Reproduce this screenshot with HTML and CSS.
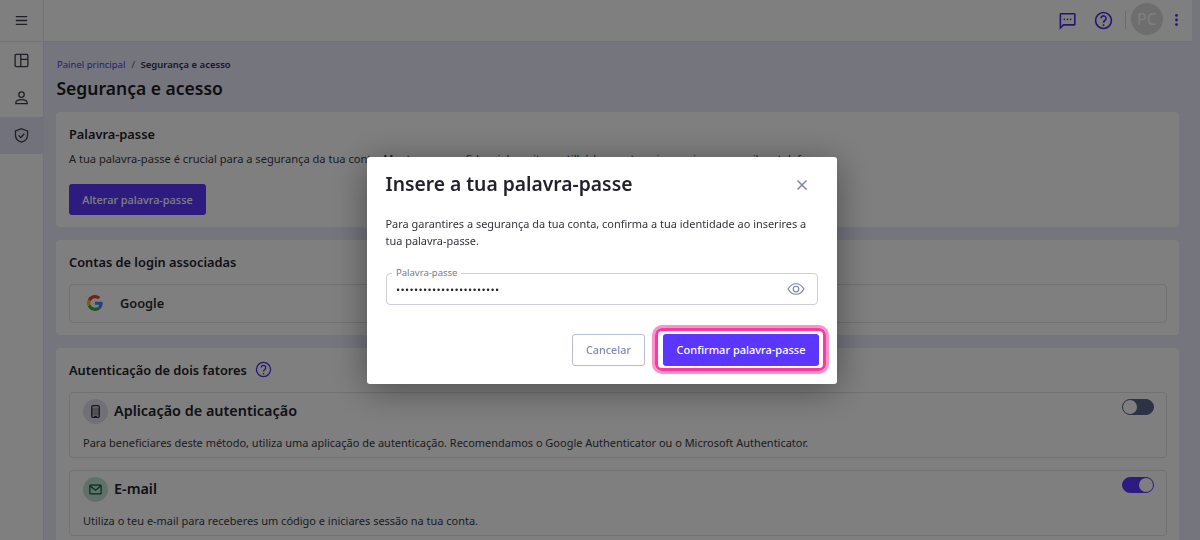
FILE: index.html
```html
<!DOCTYPE html>
<html lang="pt">
<head>
<meta charset="utf-8">
<title>Segurança e acesso</title>
<link rel="stylesheet" href="styles.css">
</head>
<body>
<div class="app">
  <header class="topbar">
    <div class="menu-cell">
      <svg class="ico" viewBox="0 0 24 24"><path d="M4 6.500h16M4 12h16M4 17.500h16" class="st"/></svg>
    </div>
    <div class="top-actions">
      <svg class="ico-lg blue" viewBox="0 0 24 24"><path d="M3.500 3.500h17a.8.8 0 0 1 .8.8v12.400a.8.8 0 0 1-.8.8H7l-4 3.800V4.300a.8.8 0 0 1 .5-.8z" class="st"/><circle cx="8" cy="10.500" r="1.100" class="fl"/><circle cx="12" cy="10.500" r="1.100" class="fl"/><circle cx="16" cy="10.500" r="1.100" class="fl"/></svg>
      <svg class="ico-lg blue help" viewBox="0 0 24 24"><circle cx="12" cy="12" r="10" class="st"/><path d="M8.800 9.300a3.200 3.200 0 1 1 5 2.700c-1.200.8-1.800 1.400-1.800 2.800" class="st"/><circle cx="12" cy="18" r="1.200" class="fl"/></svg>
      <span class="divider"></span>
      <span class="avatar">PC</span>
      <svg class="kebab blue" viewBox="0 0 6 20"><circle cx="3" cy="3.500" r="2" class="fl"/><circle cx="3" cy="10" r="2" class="fl"/><circle cx="3" cy="16.500" r="2" class="fl"/></svg>
    </div>
  </header>
  <div class="below">
    <nav class="sidebar">
      <div class="nav-item"><svg class="ico" viewBox="0 0 24 24"><rect x="3" y="3.500" width="18" height="17" rx="1.500" class="st"/><path d="M11 3.500v17M11 10.500h10" class="st"/></svg></div>
      <div class="nav-item"><svg class="ico" viewBox="0 0 24 24"><circle cx="12" cy="8" r="3.800" class="st"/><path d="M4 19.500c0-3 3.500-4.500 8-4.500s8 1.500 8 4.500v1H4z" class="st"/></svg></div>
      <div class="nav-item active"><svg class="ico" viewBox="0 0 24 24"><path d="M12 2.500l8.500 3v6.200c0 4.700-3.500 8.300-8.500 9.800-5-1.500-8.500-5.100-8.500-9.800V5.500z" class="st"/><path d="M8 11.800l3 3 5-5.300" class="st"/></svg></div>
    </nav>
    <main class="content">
      <div class="crumbs"><a class="crumb-link">Painel principal</a><span class="crumb-sep">/</span><strong class="crumb-now">Segurança e acesso</strong></div>
      <h1 class="page-title">Segurança e acesso</h1>

      <section class="card card-pass">
        <h2 class="card-title">Palavra-passe</h2>
        <p class="card-text">A tua palavra-passe é crucial para a segurança da tua conta. Mantem-na confidencial e evita partilhá-la com terceiros, seja por e-mail ou telefone.</p>
        <button class="btn-dark">Alterar palavra-passe</button>
      </section>

      <section class="card card-login">
        <h2 class="card-title">Contas de login associadas</h2>
        <div class="inner google-row">
          <svg class="google" viewBox="0 0 48 48"><path fill="#EA4335" d="M24 9.500c3.500 0 6.700 1.200 9.200 3.600l6.900-6.900C35.900 2.400 30.500 0 24 0 14.600 0 6.500 5.400 2.600 13.200l8 6.200C12.400 13.700 17.700 9.500 24 9.500z"/><path fill="#4285F4" d="M46.900 24.500c0-1.600-.1-3.100-.4-4.500H24v9h12.900c-.6 3-2.200 5.500-4.700 7.200l7.700 6c4.500-4.200 7-10.300 7-17.700z"/><path fill="#FBBC05" d="M10.500 28.600c-.5-1.400-.8-3-.8-4.600s.3-3.200.8-4.600l-8-6.200C.9 16.500 0 20.100 0 24s.9 7.500 2.600 10.800l7.900-6.200z"/><path fill="#34A853" d="M24 48c6.500 0 11.900-2.100 15.900-5.800l-7.700-6c-2.200 1.500-4.900 2.300-8.200 2.300-6.300 0-11.600-4.200-13.500-9.900l-8 6.200C6.500 42.600 14.600 48 24 48z"/></svg>
          <span class="google-name">Google</span>
        </div>
      </section>

      <section class="card card-2fa">
        <h2 class="card-title title-help">Autenticação de dois fatores
          <svg class="ico-help blue" viewBox="0 0 24 24"><circle cx="12" cy="12" r="10" class="st"/><path d="M8.800 9.300a3.200 3.200 0 1 1 5 2.700c-1.200.8-1.800 1.400-1.800 2.800" class="st"/><circle cx="12" cy="18" r="1.200" class="fl"/></svg>
        </h2>
        <div class="inner method">
          <div class="method-head">
            <span class="badge badge-grey"><svg class="badge-ico" viewBox="0 0 24 24"><rect x="6" y="2.500" width="12" height="19" rx="2" class="st"/><path d="M6 5.500h12v13H6z" class="fl-soft"/><path d="M10 20h4" class="st"/></svg></span>
            <h3 class="method-title">Aplicação de autenticação</h3>
            <span class="toggle"><span class="knob"></span></span>
          </div>
          <p class="method-text">Para beneficiares deste método, utiliza uma aplicação de autenticação. Recomendamos o Google Authenticator ou o Microsoft Authenticator.</p>
        </div>
        <div class="inner method">
          <div class="method-head">
            <span class="badge badge-green"><svg class="badge-ico green" viewBox="0 0 24 24"><rect x="3" y="5" width="18" height="14" rx="1" class="st"/><path d="M3.500 6.500L12 13l8.500-6.500" class="st"/></svg></span>
            <h3 class="method-title">E-mail</h3>
            <span class="toggle on"><span class="knob"></span></span>
          </div>
          <p class="method-text">Utiliza o teu e-mail para receberes um código e iniciares sessão na tua conta.</p>
        </div>
      </section>
    </main>
  </div>
</div>

<div class="overlay"></div>

<div class="modal">
  <div class="modal-head">
    <h2 class="modal-title">Insere a tua palavra-passe</h2>
    <svg class="close" viewBox="0 0 12 12"><path d="M1.500 1.500l9 9M10.500 1.500l-9 9" class="st"/></svg>
  </div>
  <p class="modal-text">Para garantires a segurança da tua conta, confirma a tua identidade ao inserires a tua palavra-passe.</p>
  <div class="field">
    <span class="field-label">Palavra-passe</span>
    <span class="field-dots">•••••••••••••••••••••••</span>
    <svg class="eye" viewBox="0 0 24 24"><path d="M1.500 12C4 7.500 7.800 5 12 5s8 2.500 10.500 7c-2.500 4.500-6.300 7-10.500 7S4 16.500 1.500 12z" class="st"/><circle cx="12" cy="12" r="3.700" class="st"/></svg>
  </div>
  <div class="modal-actions">
    <button class="btn-cancel">Cancelar</button>
    <button class="btn-confirm">Confirmar palavra-passe<span class="focus-ring"></span></button>
  </div>
</div>
</body>
</html>
```
FILE: styles.css
```css
* { box-sizing: border-box; }
html, body { margin: 0; height: 100%; overflow: hidden; }
body {
  font-family: "Noto Sans", sans-serif;
  color: #22222a;
  background: #e8eafb;
  font-size: 12px;
}
h1, h2, h3, p { margin: 0; }
button { font-family: inherit; }
.st { fill: none; stroke: currentColor; stroke-width: 2; }
.fl { fill: currentColor; }
.fl-soft { fill: currentColor; opacity: .35; }
.blue { color: #4a2be8; }

.app { width: 1192px; height: 540px; display: flex; flex-direction: column; }
.topbar {
  height: 41.5px; flex: none; display: flex; align-items: center;
  background: #fff; border-bottom: 1px solid #e4e4ec;
}
.menu-cell {
  width: 44px; height: 100%; display: flex; align-items: center; justify-content: center;
  border-right: 1px solid #e4e4ec;
}
.ico { width: 17px; height: 17px; color: #3d3f4d; }
.ico .st { stroke-width: 1.800; }
.top-actions { margin-left: auto; display: flex; align-items: center; padding-right: 13px; }
.ico-lg { width: 19px; height: 19px; }
.help { margin-left: 17px; }
.divider { width: 1px; height: 18px; background: #d6d6de; margin: 0 5px 0 12px; }
.avatar {
  width: 32px; height: 32px; border-radius: 50%; background: #dcdcdc; color: #fff;
  font-size: 16px; display: flex; align-items: center; justify-content: center;
  margin-top: -2px;
}
.kebab { width: 5px; height: 14px; margin-left: 11px; }

.below { flex: 1; display: flex; min-height: 0; }
.sidebar { width: 44px; flex: none; background: #fff; border-right: 1px solid #e4e4ec; }
.nav-item { height: 37.500px; display: flex; align-items: center; justify-content: center; }
.nav-item.active { background: #e3e4f6; }

.content { flex: 1; padding: 16px 13px 0 12px; min-width: 0; overflow: hidden; }
.crumbs { display: flex; align-items: center; font-size: 9.500px; line-height: 14px; }
.crumb-link { color: #5236f2; padding-left: 1px; }
.crumb-sep { margin: 0 5.500px 0 6px; color: #5a5a78; }
.crumb-now { color: #30305a; font-weight: 600; }
.page-title { font-size: 17.500px; font-weight: 600; line-height: 24px; margin: 4px 0 0; padding-left: .5px; color: #1c1c20; }

.card { background: #fff; border-radius: 4px; padding: 13px 12px 12px 13px; margin-bottom: 13px; }
.card-pass { margin-top: 12px; height: 115px; }
.card-login { height: 95px; }
.card-title { font-size: 12.800px; font-weight: 600; line-height: 18px; color: #22222a; }
.card-text { font-size: 11.100px; line-height: 16px; margin-top: 8px; white-space: nowrap; color: #3a3a42; }
.btn-dark {
  display: block; margin-top: 17px; width: 137px; height: 31px; border: 0; border-radius: 3px;
  background: #5b36ff; color: #fff; font-size: 10.900px; font-weight: 500; padding: 0;
}
.inner { border: 1px solid #e2e2e8; border-radius: 4px; }
.google-row { margin-top: 13px; height: 39px; display: flex; align-items: center; padding-left: 17px; }
.google { width: 16px; height: 16px; }
.google-name { font-weight: 600; font-size: 12.800px; margin-left: 17px; color: #2a2a32; }
.title-help { display: flex; align-items: center; gap: 8px; margin-bottom: 13px; }
.ico-help { width: 17px; height: 17px; }
.ico-help .st { stroke-width: 1.800; }
.method { padding: 6px 12px 0 13px; height: 66px; }
.method + .method { margin-top: 12px; }
.method-head { display: flex; align-items: center; height: 25px; }
.badge { width: 25px; height: 25px; border-radius: 50%; display: flex; align-items: center; justify-content: center; margin-right: 6px; flex: none; }
.badge-grey { background: #e0e1ec; }
.badge-green { background: #bfe3d2; }
.badge-ico { width: 15px; height: 15px; color: #2a2a34; }
.badge-ico.green { color: #0e5a3c; }
.method-title { font-size: 14.400px; font-weight: 600; line-height: 20px; color: #22222a; }
.toggle {
  margin-left: auto; width: 32px; height: 16px; border-radius: 8px; background: #5a6488;
  border: 1px solid #5a6488; display: flex; align-items: center; margin-top: -8px;
}
.toggle .knob { width: 14px; height: 14px; border-radius: 50%; background: #fff; }
.toggle.on { background: #5b36ff; border-color: #5b36ff; justify-content: flex-end; }
.method-text { font-size: 10.970px; line-height: 16px; margin-top: 11px; white-space: nowrap; color: #3a3a42; }

.overlay { position: fixed; inset: 0; background: rgba(0, 0, 0, .5); }

.modal {
  position: fixed; left: 367px; top: 157px; width: 470px; height: 227px;
  background: #fff; border-radius: 3px; padding: 14px 19px 0 18.500px;
  box-shadow: 0 6px 36px rgba(0, 0, 0, .4);
}
.modal-head { display: flex; align-items: center; justify-content: space-between; height: 27px; }
.modal-title { font-size: 19.300px; font-weight: 600; line-height: 27px; margin-bottom: 2px; color: #22222a; }
.close { width: 12px; height: 12px; color: #7a82ad; margin-right: 10px; }
.close .st { stroke-width: 1.500; }
.modal-text { font-size: 10.950px; line-height: 16.500px; margin-top: 18px; color: #33333b; }
.field {
  position: relative; height: 32px; margin-top: 24px; border: 1px solid #ccced8; border-radius: 4px;
  display: flex; align-items: center; justify-content: space-between; padding: 0 12px 0 10px;
}
.field-label {
  position: absolute; top: -8px; left: 5.500px; padding: 0 4px; background: #fff;
  font-size: 9.500px; line-height: 14px; color: #7a7a84;
}
.field-dots { font-size: 9px; letter-spacing: 1.350px; color: #22222a; line-height: 16px; margin-top: 1px; font-family: "Liberation Sans", sans-serif; }
.eye { width: 18px; height: 18px; color: #7a82ad; }
.eye .st { stroke-width: 1.600; }
.modal-actions { display: flex; justify-content: flex-end; align-items: center; gap: 18px; margin-top: 29px; margin-right: -1px; }
.btn-cancel {
  width: 73px; height: 32px; background: #fff; border: 1px solid #b9bcd6; border-radius: 3px;
  color: #8288b4; font-size: 10.800px; font-weight: 500; padding: 0 0 1px;
}
.btn-confirm {
  position: relative; width: 156px; height: 32px; background: #5b36ff; border: 0; border-radius: 3px;
  color: #fff; font-size: 11px; font-weight: 500; padding: 0 0 2px;
}
.focus-ring {
  position: absolute; top: -6px; left: -8px; right: -7px; bottom: -5px;
  border: 3px solid #f93aa1; border-radius: 7px; box-shadow: 0 0 0 3px #fb94cc;
  pointer-events: none;
}
```
